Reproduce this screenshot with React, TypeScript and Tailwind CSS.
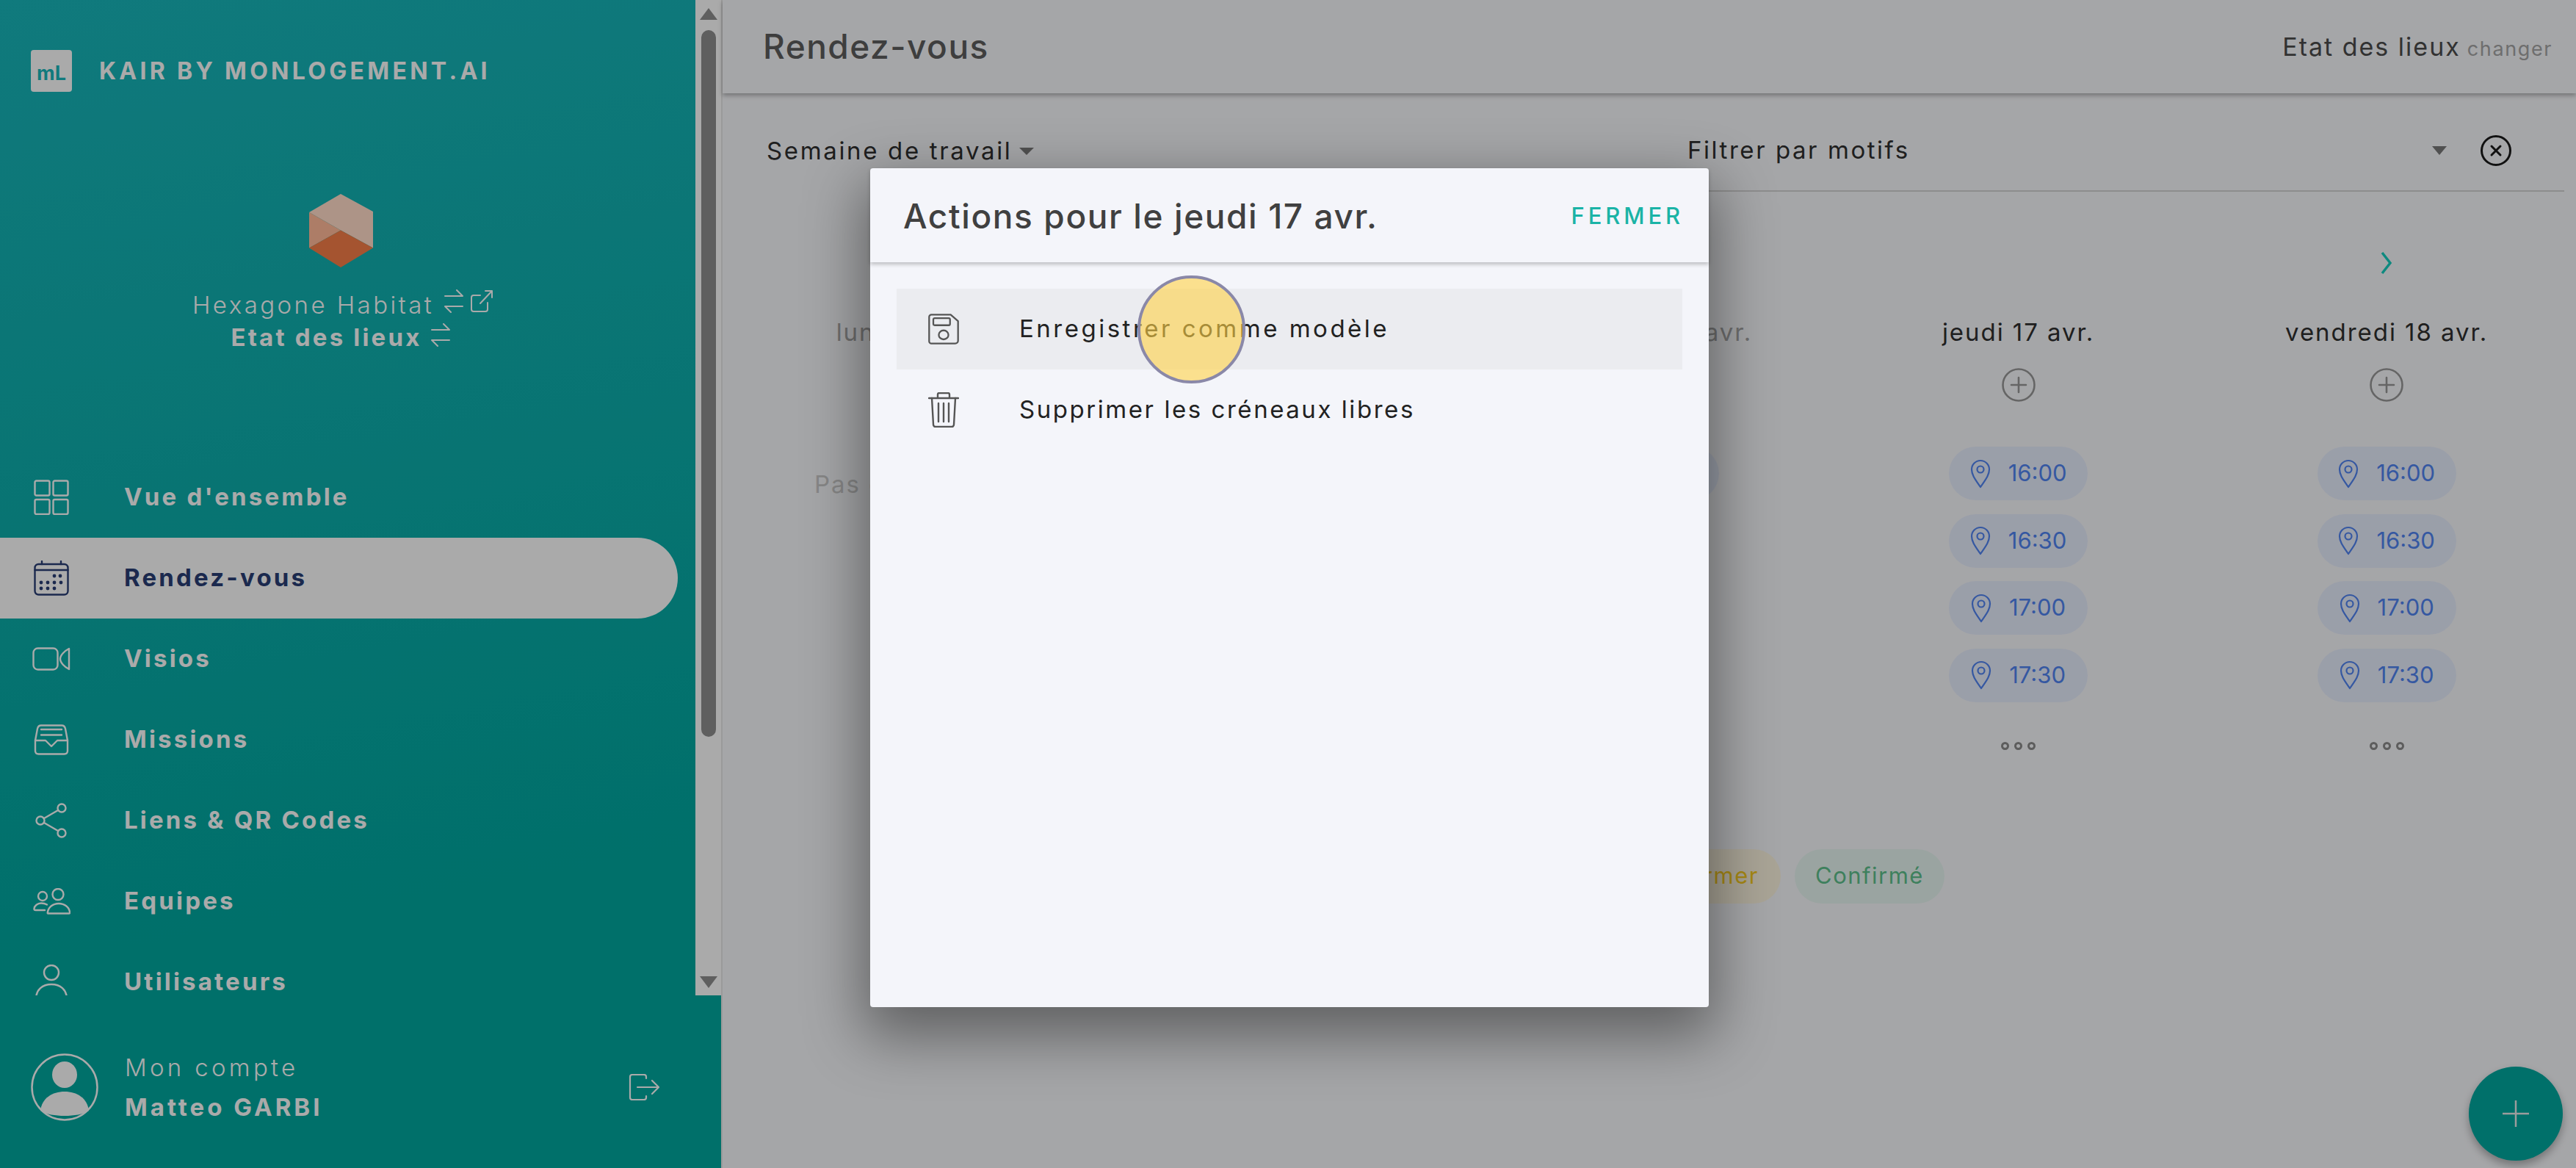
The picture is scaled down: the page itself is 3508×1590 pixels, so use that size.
import type { ReactNode } from "react";

const line = {
  fill: "none",
  stroke: "currentColor",
  strokeWidth: 2.4,
  strokeLinecap: "round" as const,
  strokeLinejoin: "round" as const,
};

// nav icons, drawn on a 48 box
const GridIcon = () => (
  <svg viewBox="0 0 48 48" className="w-[48px] h-[48px]" {...line}>
    <rect x="1.5" y="1.5" width="20" height="20" rx="2" />
    <rect x="26.5" y="1.5" width="20" height="20" rx="2" />
    <rect x="1.5" y="27" width="20" height="20" rx="2" />
    <rect x="26.5" y="27" width="20" height="20" rx="2" />
  </svg>
);

const CalendarIcon = () => (
  <svg viewBox="0 0 48 48" className="w-[48px] h-[48px]" {...line}>
    <rect x="1.5" y="5" width="45" height="41.5" rx="5" />
    <path d="M1.5 13h45M11 1v4M37 1v4" />
    {[[28, 21], [36, 21], [10, 30], [19, 30], [28, 30], [37, 30], [10, 38], [19, 38], [28, 38]].map(([x, y]) => (
      <circle key={`${x}-${y}`} cx={x} cy={y} r="2.4" fill="currentColor" stroke="none" />
    ))}
  </svg>
);

const VideoIcon = () => (
  <svg viewBox="0 0 52 32" className="w-[52px] h-[32px]" {...line}>
    <rect x="1.5" y="1.5" width="33" height="29" rx="6" />
    <path d="M38 16c0-5 6-11 12-14v28c-6-3-12-9-12-14z" />
  </svg>
);

const InboxIcon = () => (
  <svg viewBox="0 0 48 42" className="w-[48px] h-[42px]" {...line}>
    <path d="M2 22 5 6q1-4.500 5-4.500h28q4 0 5 4.500l3 16v14q0 4.500-4.500 4.500h-35Q2 40.500 2 36z" />
    <path d="M10 7h28M10 14.500h28" />
    <path d="M2 22h14l8 8 8-8h14" />
  </svg>
);

const ShareIcon = () => (
  <svg viewBox="0 0 48 48" className="w-[48px] h-[48px]" {...line}>
    <circle cx="38" cy="7" r="5.500" />
    <circle cx="38" cy="41" r="5.500" />
    <circle cx="9" cy="24" r="5.500" />
    <path d="M33 10 14 21M14 27l19 11" />
  </svg>
);

const TeamIcon = () => (
  <svg viewBox="0 0 52 36" className="w-[52px] h-[36px]" {...line}>
    <circle cx="14" cy="11" r="6" />
    <circle cx="35" cy="8.500" r="7.500" />
    <path d="M21 34.500h29c1 0 1.500-.5 1-2C50 26 44 21 36 21s-14 5-15 11.500c-.5 1.500 0 2 0 2z" />
    <path d="M20 22.500c-2.500-1.500-5-2-8-2-5 0-9 3.500-9.500 7.500-.2 1.500.5 2 2 2H17" />
  </svg>
);

const UserIcon = () => (
  <svg viewBox="0 0 48 48" className="w-[48px] h-[48px]" {...line}>
    <ellipse cx="24" cy="11" rx="10" ry="10" />
    <path d="M3 47c0-13 9-20 21-20s21 7 21 20" />
  </svg>
);

const SwapIcon = () => (
  <svg viewBox="0 0 26 32" className="w-[26px] h-[32px]" fill="none" stroke="currentColor" strokeWidth="2" strokeLinecap="round" strokeLinejoin="round">
    <path d="M1 9h24l-8-8M25 23H1l8 8" />
  </svg>
);

const ExternalIcon = () => (
  <svg viewBox="0 0 30 30" className="w-[30px] h-[30px]" fill="none" stroke="currentColor" strokeWidth="2" strokeLinecap="round" strokeLinejoin="round">
    <path d="M13 7H4a3 3 0 0 0-3 3v16a3 3 0 0 0 3 3h16a3 3 0 0 0 3-3v-9" />
    <path d="M13 18 29 1M20 1h9v9" />
  </svg>
);

const LogoutIcon = () => (
  <svg viewBox="0 0 42 36" className="w-[42px] h-[36px]" fill="none" stroke="currentColor" strokeWidth="2.200" strokeLinecap="round" strokeLinejoin="round">
    <path d="M24 6V4a3 3 0 0 0-3-3H5a3 3 0 0 0-3 3v28a3 3 0 0 0 3 3h16a3 3 0 0 0 3-3v-2" />
    <path d="M12 18h28M32 9l9 9-9 9" />
  </svg>
);

const AvatarIcon = () => (
  <svg viewBox="0 0 92 92" className="w-[92px] h-[92px]">
    <circle cx="46" cy="46" r="44.500" fill="none" stroke="currentColor" strokeWidth="2.500" />
    <ellipse cx="46" cy="29" rx="17" ry="18" fill="currentColor" />
    <path d="M13 78c2-17 16-26 33-26s31 9 33 26c-8 5-20 7-33 7s-25-2-33-7z" fill="currentColor" />
  </svg>
);

const HexLogo = () => (
  <svg viewBox="0 0 87 100" className="w-[87px] h-[100px]">
    <path d="M43 0 87 24v49.500L43 49.500 0 25z" fill="#ffdac8" />
    <path d="M0 25 43 49.500 0 73.500z" fill="#ffb999" />
    <path d="M43 49.500 87 73.500 43 100 0 73.500z" fill="#f37d47" />
  </svg>
);

const PinIcon = () => (
  <svg viewBox="0 0 28 40" className="w-[28px] h-[40px]" fill="none" stroke="currentColor" strokeWidth="2.200" strokeLinejoin="round">
    <path d="M14 38C8 29 2 22 2 14a12 12 0 0 1 24 0c0 8-6 15-12 24z" />
    <circle cx="14" cy="14" r="4.500" />
  </svg>
);

const PlusCircle = () => (
  <svg viewBox="0 0 46 46" className="w-[46px] h-[46px] text-[#969696]" fill="none" stroke="currentColor" strokeWidth="2.600" strokeLinecap="round">
    <circle cx="23" cy="23" r="21.500" />
    <path d="M23 13v20M13 23h20" />
  </svg>
);

const NAV: { label: string; icon: ReactNode; active?: boolean }[] = [
  { label: "Vue d'ensemble", icon: <GridIcon /> },
  { label: "Rendez-vous", icon: <CalendarIcon />, active: true },
  { label: "Visios", icon: <VideoIcon /> },
  { label: "Missions", icon: <InboxIcon /> },
  { label: "Liens & QR Codes", icon: <ShareIcon /> },
  { label: "Equipes", icon: <TeamIcon /> },
  { label: "Utilisateurs", icon: <UserIcon /> },
];

const SLOTS = ["16:00", "16:30", "17:00", "17:30"];

const Slot = ({ time }: { time: string }) => (
  <div className="w-[189px] h-[73px] rounded-full bg-[#e4eafa] text-[#4f82ee] flex items-center justify-center gap-[24px] text-[31px]">
    <PinIcon />
    <span>{time}</span>
  </div>
);

const Dots = () => (
  <div className="flex gap-[7px] mt-[54px]">
    <span className="w-[11px] h-[11px] rounded-full border-[3px] border-[#8a8a8a]" />
    <span className="w-[11px] h-[11px] rounded-full border-[3px] border-[#8a8a8a]" />
    <span className="w-[11px] h-[11px] rounded-full border-[3px] border-[#8a8a8a]" />
  </div>
);

const DayColumn = ({ title }: { title: string }) => (
  <div className="flex flex-col items-center">
    <div className="h-[50px] flex items-center text-[33px] text-[#2e2e2e] tracking-[1.950px]">{title}</div>
    <div className="mt-[23px]">
      <PlusCircle />
    </div>
    <div className="mt-[61px] flex flex-col gap-[18.500px]">
      {SLOTS.map((s) => (
        <Slot key={s} time={s} />
      ))}
    </div>
    <Dots />
  </div>
);

const Sidebar = () => (
  <aside className="w-[982px] h-full shrink-0 flex flex-col bg-linear-170 from-[#18b4b8] to-[#00a59d] to-75% text-[#fbfbfb]">
    <div className="h-[1355px] flex overflow-hidden">
      <div className="flex-1 min-w-0 flex flex-col">
        <div className="flex items-center pt-[68px] pl-[42px] gap-[37px]">
          <div className="w-[56px] h-[57px] rounded-[4px] bg-[#fbfbfb] text-[#18b4b8] flex items-center justify-center pt-[8px] text-[27px] font-bold">
            mL
          </div>
          <span className="text-[32px] font-bold tracking-[4.300px]">KAIR BY MONLOGEMENT.AI</span>
        </div>
        <div className="flex flex-col items-center mt-[139px] pr-[18px]">
          <HexLogo />
          <div className="mt-[27px] flex items-center gap-[14px] pl-[4px] text-[33px] font-light tracking-[3.450px]">
            <span>Hexagone Habitat</span>
            <span className="flex items-center gap-[10px] -mt-[12px]">
              <SwapIcon />
              <ExternalIcon />
            </span>
          </div>
          <div className="flex items-center gap-[12px] -mt-[6px] pr-[2px] text-[33px] font-bold tracking-[3.200px]">
            <span>Etat des lieux</span>
            <span className="-mt-[6px]">
              <SwapIcon />
            </span>
          </div>
        </div>
        <nav className="mt-[138px] w-[923px] flex flex-col">
          {NAV.map((item) => (
            <div
              key={item.label}
              className={`h-[110px] shrink-0 flex items-center pl-[44px] text-[33px] font-bold tracking-[3.200px] ${
                item.active ? "bg-[#fbfbfb] text-[#293d73] rounded-r-full" : ""
              }`}
            >
              <span className="w-[52px] flex justify-center">{item.icon}</span>
              <span className="ml-[73px]">{item.label}</span>
            </div>
          ))}
        </nav>
      </div>
      {/* scrollbar */}
      <div className="w-[35px] shrink-0 bg-[#fbfbfb] flex flex-col items-center">
        <svg viewBox="0 0 24 16" className="w-[24px] h-[16px] mt-[11px] text-[#8c8c8c]" fill="currentColor">
          <path d="M12 0 24 16H0z" />
        </svg>
        <div className="w-[20px] h-[962px] mt-[14px] rounded-full bg-[#8c8c8c]" />
        <svg viewBox="0 0 24 16" className="w-[24px] h-[16px] mt-auto mb-[10px] text-[#8c8c8c]" fill="currentColor">
          <path d="M0 0h24L12 16z" />
        </svg>
      </div>
    </div>
    <div className="flex-1 flex items-center pt-[14px] pl-[42px] pr-[84px]">
      <AvatarIcon />
      <div className="ml-[36px] flex flex-col gap-[18px] text-[33px] leading-[36px]">
        <span className="font-light tracking-[4.300px]">Mon compte</span>
        <span className="font-bold tracking-[4px]">Matteo GARBI</span>
      </div>
      <div className="ml-auto">
        <LogoutIcon />
      </div>
    </div>
  </aside>
);

const Main = () => (
  <main className="flex-1 min-w-0 h-full border-l-2 border-[#e4e4e4] bg-[#f4f5f8] relative flex flex-col">
    <header className="h-[127px] shrink-0 flex items-center justify-between pl-[55px] pr-[32px] shadow-[0_3px_6px_rgba(0,0,0,0.3)]">
      <h1 className="text-[46px] font-medium tracking-[1.500px] text-[#5c5c5c]">Rendez-vous</h1>
      <div className="flex items-baseline gap-[9px]">
        <span className="text-[34px] text-[#4a4a4a] tracking-[2px]">Etat des lieux</span>
        <span className="text-[27px] text-[#a2a2a2] tracking-[1.600px]">changer</span>
      </div>
    </header>

    <div className="flex pl-[60px] pr-[16px] h-[134px] shrink-0">
      <div className="w-[1254px] flex items-center gap-[10px] pt-[24px] text-[33px] text-[#2e2e2e] tracking-[2.650px]">
        <span>Semaine de travail</span>
        <span className="w-0 h-0 border-x-[10px] border-x-transparent border-t-[10px] border-t-[#777]" />
      </div>
      <div className="flex-1 flex items-center pt-[24px] border-b-2 border-[#d0d0d0] text-[33px] text-[#2e2e2e] tracking-[2.550px]">
        <span>Filtrer par motifs</span>
        <span className="ml-auto w-0 h-0 border-x-[10px] border-x-transparent border-t-[12px] border-t-[#777]" />
        <svg viewBox="0 0 42 42" className="w-[42px] h-[42px] ml-[46px] mr-[72px]" fill="none" stroke="#1a1a1a" strokeWidth="3" strokeLinecap="round">
          <circle cx="21" cy="21" r="19.500" />
          <path d="M15 15l12 12M27 15 15 27" />
        </svg>
      </div>
    </div>

    <div className="grid grid-cols-5 ml-[9px] mr-[7px] mt-[67px] h-[60px] shrink-0">
      <div className="col-start-5 flex items-center justify-center">
        <svg viewBox="0 0 16 32" className="w-[16px] h-[32px]" fill="none" stroke="#16cbbc" strokeWidth="3.500">
          <path d="M2 2l11 14L2 30" />
        </svg>
      </div>
    </div>

    <div className="grid grid-cols-5 ml-[9px] mr-[7px] mt-[40px]">
      <div className="flex flex-col items-center text-[#a2a2a2] tracking-[1.950px]">
        <div className="h-[50px] flex items-center text-[33px]">lundi 14 avr.</div>
        <div className="mt-[157px] text-[33px] text-[#c6c6c6]">Pas de créneau</div>
      </div>
      <div className="flex flex-col items-center text-[#a2a2a2] tracking-[1.950px]">
        <div className="h-[50px] flex items-center text-[33px]">mardi 15 avr.</div>
      </div>
      <div className="flex flex-col items-center text-[#a2a2a2]">
        <div className="h-[50px] flex items-center text-[33px] tracking-[1.950px]">mercredi 16 avr.</div>
        <div className="mt-[130px]">
          <Slot time="16:00" />
        </div>
      </div>
      <DayColumn title="jeudi 17 avr." />
      <DayColumn title="vendredi 18 avr." />
    </div>

    <div className="flex justify-end gap-[19px] pr-[860px] mt-[135px] text-[31px] tracking-[1.500px]">
      <span className="h-[74px] px-[30px] rounded-full bg-[#f9f2de] text-[#f5c91f] flex items-center">A confirmer</span>
      <span className="h-[74px] w-[204px] justify-center rounded-full bg-[#e4f2ee] text-[#5cbd8a] flex items-center">Confirmé</span>
    </div>

    <div className="absolute right-[18px] bottom-[10px] w-[128px] h-[128px] rounded-full bg-[#00a59d] text-[#e6e6e6] flex items-center justify-center shadow-[0_6px_12px_rgba(0,0,0,0.3)]">
      <svg viewBox="0 0 36 36" className="w-[36px] h-[36px]" fill="none" stroke="currentColor" strokeWidth="2.500">
        <path d="M18 0v36M0 18h36" />
      </svg>
    </div>
  </main>
);

const SaveIcon = () => (
  <svg viewBox="0 0 48 48" className="w-[48px] h-[48px]" fill="none" stroke="#555" strokeWidth="2.600" strokeLinejoin="round">
    <path d="M5 1.500h30l11.500 10V42a4.500 4.500 0 0 1-4.500 4.500H5A3.500 3.500 0 0 1 1.500 43V5A3.500 3.500 0 0 1 5 1.500z" />
    <rect x="8" y="7" width="26" height="11" rx="2" />
    <ellipse cx="24" cy="33" rx="7.500" ry="7" />
  </svg>
);

const TrashIcon = () => (
  <svg viewBox="0 0 42 48" className="w-[42px] h-[48px]" fill="none" stroke="#555" strokeWidth="2.400" strokeLinecap="round" strokeLinejoin="round">
    <path d="M1 8h40M13 8V3a2 2 0 0 1 2-2h12a2 2 0 0 1 2 2v5" />
    <path d="M5 8l2 36a3 3 0 0 0 3 3h22a3 3 0 0 0 3-3l2-36" />
    <path d="M14 15v25M21 15v25M28 15v25" />
  </svg>
);

const Dialog = () => (
  <div className="absolute left-[1185px] top-[229px] w-[1142px] h-[1142px] rounded-[4px] bg-[#f4f5fa] shadow-[0_30px_80px_10px_rgba(0,0,0,0.42)] flex flex-col">
    <div className="h-[128px] shrink-0 flex items-center justify-between pl-[45px] pr-[34px] pt-[2px] shadow-[0_3px_5px_rgba(0,0,0,0.22)]">
      <h2 className="text-[46px] font-medium tracking-[1.600px] text-[#404040]">Actions pour le jeudi 17 avr.</h2>
      <button className="text-[31px] font-medium tracking-[4.900px] text-[#1ab3a6]">FERMER</button>
    </div>
    <div className="pt-[36px] px-[36px] flex flex-col text-[33px] text-[#222]">
      <div className="h-[110px] bg-[#ebecf0] flex items-center">
        <span className="w-[42px] ml-[43px] flex justify-center">
          <SaveIcon />
        </span>
        <span className="ml-[82px] tracking-[3.500px]">Enregistrer comme modèle</span>
      </div>
      <div className="h-[110px] flex items-center">
        <span className="w-[42px] ml-[43px] flex justify-center">
          <TrashIcon />
        </span>
        <span className="ml-[82px] tracking-[2.550px]">Supprimer les créneaux libres</span>
      </div>
    </div>
  </div>
);

export default function App() {
  return (
    <div className="relative w-[3508px] h-[1590px] overflow-hidden flex font-['Inter',sans-serif]">
      <Sidebar />
      <Main />
      {/* backdrop */}
      <div className="absolute inset-0 bg-black/32" />
      <Dialog />
      {/* click highlight */}
      <div className="absolute left-[1549px] top-[375px] w-[147px] h-[147px] rounded-full border-[4px] border-[#8a88a8] bg-[#ffd246]/60" />
    </div>
  );
}
